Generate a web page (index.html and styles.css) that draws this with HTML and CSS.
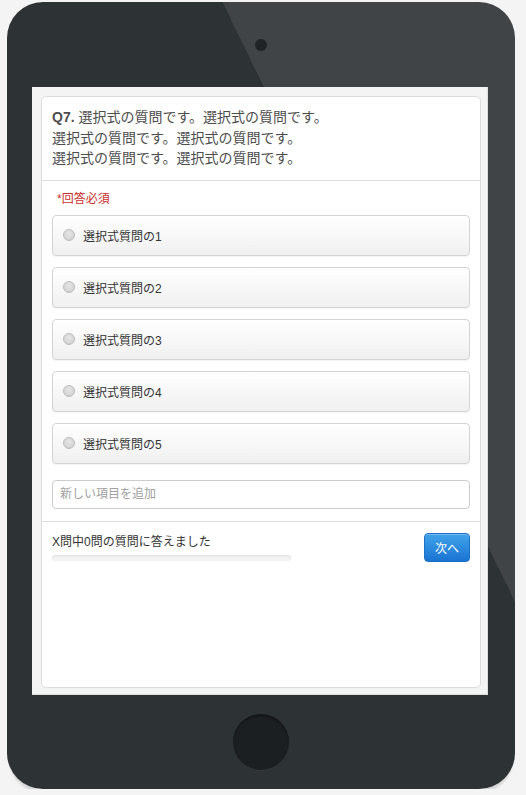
FILE: index.html
```html
<!DOCTYPE html>
<html lang="ja">
<head>
<meta charset="utf-8">
<title>質問</title>
<link rel="stylesheet" href="styles.css">
</head>
<body>
<div class="device">
  <div class="top-bezel"><span class="camera"></span></div>
  <div class="screen">
    <div class="card">
      <div class="q-head"><b class="q-num">Q7.</b> 選択式の質問です。選択式の質問です。<br>選択式の質問です。選択式の質問です。<br>選択式の質問です。選択式の質問です。</div>
      <div class="q-body">
        <div class="required">*回答必須</div>
        <ul class="options">
          <li class="option"><span class="radio"></span>選択式質問の1</li>
          <li class="option"><span class="radio"></span>選択式質問の2</li>
          <li class="option"><span class="radio"></span>選択式質問の3</li>
          <li class="option"><span class="radio"></span>選択式質問の4</li>
          <li class="option"><span class="radio"></span>選択式質問の5</li>
        </ul>
        <input class="new-item" type="text" placeholder="新しい項目を追加">
      </div>
      <div class="q-foot">
        <div class="progress">
          <div class="progress-text">X問中0問の質問に答えました</div>
          <div class="bar"></div>
        </div>
        <button class="next" type="button">次へ</button>
      </div>
    </div>
  </div>
  <div class="bottom-bezel"><span class="home"></span></div>
</div>
</body>
</html>
```
FILE: styles.css
```css
html, body {
  margin: 0;
  padding: 0;
}
body {
  background: #f4f4f4;
  font-family: "Liberation Sans", "Noto Sans CJK JP", sans-serif;
  padding: 2px 0 0 7px;
}
.device {
  width: 508px;
  height: 787px;
  border-radius: 36px;
  background: linear-gradient(64deg, #2d3235 67.2%, #404447 67.2%);
  box-shadow: 0 6px 2px -2px #d8d8d8;
  display: flex;
  flex-direction: column;
  overflow: hidden;
}
.top-bezel {
  height: 85px;
  display: flex;
  justify-content: center;
  align-items: center;
}
.camera {
  width: 12px;
  height: 12px;
  border-radius: 50%;
  background: #1f2326;
}
.screen {
  height: 608px;
  margin: 0 27px 0 25px;
  box-sizing: border-box;
  background: #f4f4f4;
  padding: 9px 7px 7px 9px;
  box-shadow: inset -1px -1px 0 #dedede;
  display: flex;
}
.card {
  flex: 1;
  background: #fff;
  border: 1px solid #dcdcdc;
  border-radius: 5px;
  display: flex;
  flex-direction: column;
}
.q-head {
  padding: 10px 10px 11px 10px;
  font-size: 14px;
  line-height: 20.5px;
  color: #4d4d4d;
  border-bottom: 1px solid #dedede;
}
.q-num {
  font-weight: bold;
  color: #4d4d4d;
}
.q-body {
  padding: 10px 10px 12px 10px;
  border-bottom: 1px solid #dedede;
}
.required {
  font-size: 12px;
  line-height: 16px;
  color: #c9302c;
  padding-left: 5px;
  margin-bottom: 8px;
}
.options {
  list-style: none;
  margin: 0;
  padding: 0;
  display: flex;
  flex-direction: column;
  gap: 11px;
}
.option {
  height: 41px;
  box-sizing: border-box;
  border: 1px solid #d4d4d4;
  border-radius: 4px;
  background: linear-gradient(#ffffff, #f0f0f0);
  box-shadow: 0 1px 1px rgba(0, 0, 0, 0.05);
  display: flex;
  align-items: center;
  padding-left: 10px;
  font-size: 12px;
  color: #333;
}
.radio {
  width: 12px;
  height: 12px;
  box-sizing: border-box;
  border-radius: 50%;
  border: 1px solid #bdbdbd;
  background: radial-gradient(circle at 50% 40%, #e6e6e6 0%, #d4d4d4 70%, #c8c8c8 100%);
  margin-right: 8px;
}
.new-item {
  display: block;
  width: 100%;
  height: 29px;
  box-sizing: border-box;
  margin-top: 16px;
  border: 1px solid #cccccc;
  border-radius: 4px;
  padding: 0 7px;
  font-family: "Liberation Sans", "Noto Sans CJK JP", sans-serif;
  font-size: 12px;
  color: #333;
  background: #fff;
  outline: none;
}
.new-item::placeholder {
  color: #a0a0a0;
}
.q-foot {
  padding: 11px 10px 0 10px;
  display: flex;
  justify-content: space-between;
  align-items: flex-start;
}
.progress-text {
  font-size: 12px;
  line-height: 16px;
  color: #333;
  margin-top: 1px;
}
.bar {
  width: 239px;
  height: 6px;
  margin-top: 5px;
  border-radius: 3px;
  background: #f2f2f2;
  box-shadow: inset 0 1px 2px rgba(0, 0, 0, 0.08);
}
.next {
  width: 46px;
  height: 29px;
  border: 1px solid #1e6fc6;
  border-radius: 4px;
  background: linear-gradient(#41a3ea, #1a74d2);
  color: #fff;
  font-family: "Liberation Sans", "Noto Sans CJK JP", sans-serif;
  font-size: 12px;
  padding: 0;
  box-shadow: inset 0 1px 0 rgba(255, 255, 255, 0.25);
}
.bottom-bezel {
  flex: 1;
  display: flex;
  justify-content: center;
  align-items: center;
}
.home {
  width: 56px;
  height: 56px;
  border-radius: 50%;
  background: #1c1f22;
  box-shadow: inset 0 2px 2px rgba(0, 0, 0, 0.35), 0 1px 0 rgba(255, 255, 255, 0.03);
}
```
